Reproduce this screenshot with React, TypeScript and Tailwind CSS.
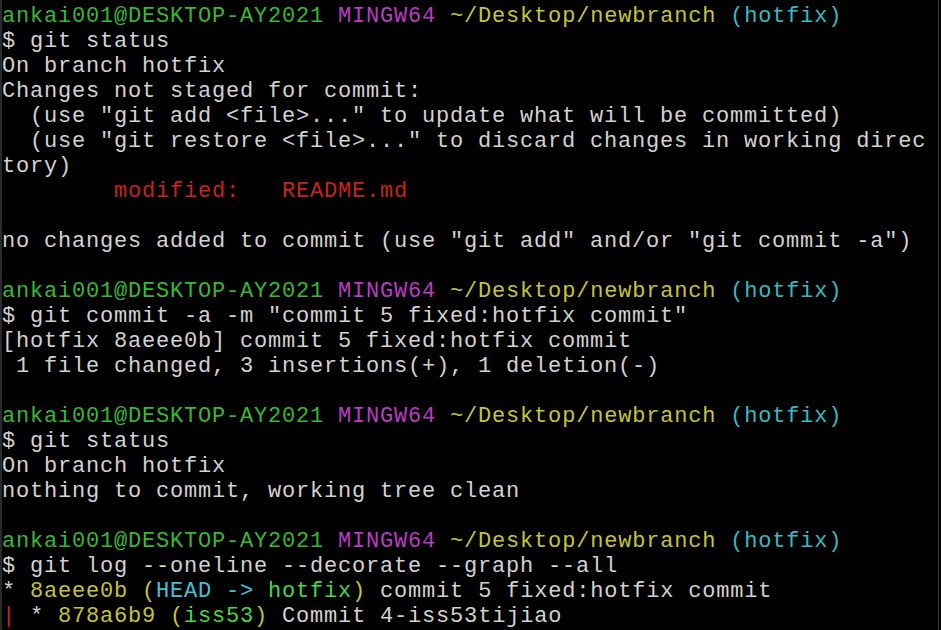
type Seg = { t: string; c?: string };

const G = "text-[#35b935]";
const M = "text-[#b93cc4]";
const Y = "text-[#c4c43a]";
const C = "text-[#3ab9c4]";
const R = "text-[#c8231c]";
const W = "text-[#d2d2d2]";

const prompt: Seg[] = [
  { t: "ankai001@DESKTOP-AY2021", c: G },
  { t: " " },
  { t: "MINGW64", c: M },
  { t: " " },
  { t: "~/Desktop/newbranch", c: Y },
  { t: " " },
  { t: "(hotfix)", c: C },
];

const lines: Seg[][] = [
  prompt,
  [{ t: "$ git status" }],
  [{ t: "On branch hotfix" }],
  [{ t: "Changes not staged for commit:" }],
  [{ t: '  (use "git add <file>..." to update what will be committed)' }],
  [{ t: '  (use "git restore <file>..." to discard changes in working direc' }],
  [{ t: "tory)" }],
  [{ t: "        " }, { t: "modified:   README.md", c: R }],
  [],
  [{ t: 'no changes added to commit (use "git add" and/or "git commit -a")' }],
  [],
  prompt,
  [{ t: '$ git commit -a -m "commit 5 fixed:hotfix commit"' }],
  [{ t: "[hotfix 8aeee0b] commit 5 fixed:hotfix commit" }],
  [{ t: " 1 file changed, 3 insertions(+), 1 deletion(-)" }],
  [],
  prompt,
  [{ t: "$ git status" }],
  [{ t: "On branch hotfix" }],
  [{ t: "nothing to commit, working tree clean" }],
  [],
  prompt,
  [{ t: "$ git log --oneline --decorate --graph --all" }],
  [
    { t: "* " },
    { t: "8aeee0b (", c: Y },
    { t: "HEAD -> ", c: "text-[#40c4dc]" },
    { t: "hotfix", c: "text-[#45d845]" },
    { t: ")", c: Y },
    { t: " commit 5 fixed:hotfix commit" },
  ],
  [
    { t: "|", c: R },
    { t: " * " },
    { t: "878a6b9 (", c: Y },
    { t: "iss53", c: "text-[#45d845]" },
    { t: ")", c: Y },
    { t: " Commit 4-iss53tijiao" },
  ],
];

export default function App() {
  return (
    <div className="w-[941px] h-[630px] overflow-hidden bg-black flex">
      <div className="w-[2px] bg-[#2a2a2a]" />
      <div
        className="flex-1 pt-[4px] text-[22px] leading-[25px] tracking-[0.8px] whitespace-pre"
        style={{ fontFamily: '"Liberation Mono", "DejaVu Sans Mono", monospace' }}
      >
        {lines.map((segs, i) => (
          <div key={i} className={`h-[25px] ${W}`}>
            {segs.map((s, j) => (
              <span key={j} className={s.c ?? W}>
                {s.t}
              </span>
            ))}
          </div>
        ))}
      </div>
      <div className="w-[1px] bg-[#3a3a3a] mr-[2px]" />
    </div>
  );
}
